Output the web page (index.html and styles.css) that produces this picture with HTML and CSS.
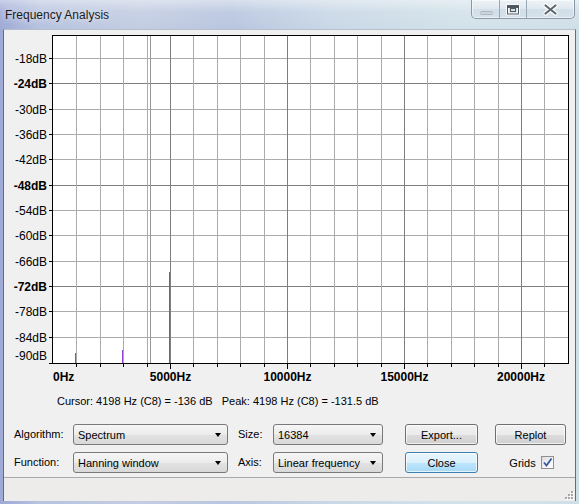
FILE: index.html
```html
<!DOCTYPE html>
<html>
<head>
<meta charset="utf-8">
<link rel="stylesheet" href="styles.css">
</head>
<body>
<div class="window">
  <div class="titlebar">
    <div class="title">Frequency Analysis</div>
    <div class="captions">
      <div class="cap cap-min"><svg width="27" height="18" viewBox="0 0 27 18"><rect x="8.5" y="11.5" width="12" height="3" rx="1" fill="#ccd3da" stroke="#afb8c2"/></svg></div>
      <div class="cap cap-max"><svg width="26" height="18" viewBox="0 0 26 18"><rect x="7.5" y="5.5" width="11" height="8.5" fill="none" stroke="#ffffff" stroke-width="2.6"/><rect x="7.5" y="5.5" width="11" height="8.5" fill="none" stroke="#505860" stroke-width="1"/><rect x="8" y="6" width="10" height="2" fill="#505860"/><rect x="10.5" y="8.5" width="5" height="3" fill="none" stroke="#505860" stroke-width="1"/></svg></div>
      <div class="cap cap-close"><svg width="47" height="18" viewBox="0 0 47 18"><path d="M18.5 5.5 L28.5 13.5 M28.5 5.5 L18.5 13.5" stroke="#ffffff" stroke-width="4.2" stroke-linecap="round"/><path d="M18.5 5.5 L28.5 13.5 M28.5 5.5 L18.5 13.5" stroke="#5f6770" stroke-width="2.2" stroke-linecap="round"/></svg></div>
    </div>
  </div>
  <div class="client">
    <svg class="chart" width="571" height="360" viewBox="4 30 571 360" shape-rendering="crispEdges">
      <rect x="52.5" y="35.5" width="516" height="328" fill="#ffffff" stroke="none"/>
      <g class="hgrid" stroke="#ababab" stroke-width="1">
        <line x1="53" y1="58.5" x2="568" y2="58.5"/>
        <line x1="53" y1="83.5" x2="568" y2="83.5" stroke="#7f7f7f"/>
        <line x1="53" y1="109.5" x2="568" y2="109.5"/>
        <line x1="53" y1="134.5" x2="568" y2="134.5"/>
        <line x1="53" y1="159.5" x2="568" y2="159.5"/>
        <line x1="53" y1="185.5" x2="568" y2="185.5" stroke="#7f7f7f"/>
        <line x1="53" y1="210.5" x2="568" y2="210.5"/>
        <line x1="53" y1="235.5" x2="568" y2="235.5"/>
        <line x1="53" y1="261.5" x2="568" y2="261.5"/>
        <line x1="53" y1="286.5" x2="568" y2="286.5" stroke="#7f7f7f"/>
        <line x1="53" y1="311.5" x2="568" y2="311.5"/>
        <line x1="53" y1="337.5" x2="568" y2="337.5"/>
      </g>
      <g class="vgrid" stroke="#ababab" stroke-width="1">
        <line x1="76.5" y1="36" x2="76.5" y2="363"/>
        <line x1="100.5" y1="36" x2="100.5" y2="363"/>
        <line x1="123.5" y1="36" x2="123.5" y2="363"/>
        <line x1="147.5" y1="36" x2="147.5" y2="363"/>
        <line x1="170.5" y1="36" x2="170.5" y2="363" stroke="#7f7f7f"/>
        <line x1="193.5" y1="36" x2="193.5" y2="363"/>
        <line x1="217.5" y1="36" x2="217.5" y2="363"/>
        <line x1="240.5" y1="36" x2="240.5" y2="363"/>
        <line x1="264.5" y1="36" x2="264.5" y2="363"/>
        <line x1="287.5" y1="36" x2="287.5" y2="363" stroke="#7f7f7f"/>
        <line x1="310.5" y1="36" x2="310.5" y2="363"/>
        <line x1="334.5" y1="36" x2="334.5" y2="363"/>
        <line x1="357.5" y1="36" x2="357.5" y2="363"/>
        <line x1="381.5" y1="36" x2="381.5" y2="363"/>
        <line x1="404.5" y1="36" x2="404.5" y2="363" stroke="#7f7f7f"/>
        <line x1="427.5" y1="36" x2="427.5" y2="363"/>
        <line x1="451.5" y1="36" x2="451.5" y2="363"/>
        <line x1="474.5" y1="36" x2="474.5" y2="363"/>
        <line x1="498.5" y1="36" x2="498.5" y2="363"/>
        <line x1="521.5" y1="36" x2="521.5" y2="363" stroke="#7f7f7f"/>
        <line x1="544.5" y1="36" x2="544.5" y2="363"/>
      </g>
      <line x1="150.5" y1="36" x2="150.5" y2="363" stroke="#969696"/>
      <g fill="#9440d2">
        <rect x="75" y="353" width="1" height="10"/>
        <rect x="122" y="350" width="1" height="13"/>
        <rect x="169" y="272" width="1" height="91"/>
      </g>
      <rect x="52.5" y="35.5" width="516" height="328" fill="none" stroke="#000000"/>
      <g class="yticks" stroke="#000000">
        <line x1="49" y1="58.5" x2="52" y2="58.5"/>
        <line x1="49" y1="83.5" x2="52" y2="83.5"/>
        <line x1="49" y1="109.5" x2="52" y2="109.5"/>
        <line x1="49" y1="134.5" x2="52" y2="134.5"/>
        <line x1="49" y1="159.5" x2="52" y2="159.5"/>
        <line x1="49" y1="185.5" x2="52" y2="185.5"/>
        <line x1="49" y1="210.5" x2="52" y2="210.5"/>
        <line x1="49" y1="235.5" x2="52" y2="235.5"/>
        <line x1="49" y1="261.5" x2="52" y2="261.5"/>
        <line x1="49" y1="286.5" x2="52" y2="286.5"/>
        <line x1="49" y1="311.5" x2="52" y2="311.5"/>
        <line x1="49" y1="337.5" x2="52" y2="337.5"/>
        <line x1="49" y1="363.5" x2="52" y2="363.5"/>
      </g>
      <g class="xticks" stroke="#000000">
        <line x1="76.5" y1="364" x2="76.5" y2="367"/>
        <line x1="100.5" y1="364" x2="100.5" y2="367"/>
        <line x1="123.5" y1="364" x2="123.5" y2="367"/>
        <line x1="147.5" y1="364" x2="147.5" y2="367"/>
        <line x1="170.5" y1="364" x2="170.5" y2="369"/>
        <line x1="193.5" y1="364" x2="193.5" y2="367"/>
        <line x1="217.5" y1="364" x2="217.5" y2="367"/>
        <line x1="240.5" y1="364" x2="240.5" y2="367"/>
        <line x1="264.5" y1="364" x2="264.5" y2="367"/>
        <line x1="287.5" y1="364" x2="287.5" y2="369"/>
        <line x1="310.5" y1="364" x2="310.5" y2="367"/>
        <line x1="334.5" y1="364" x2="334.5" y2="367"/>
        <line x1="357.5" y1="364" x2="357.5" y2="367"/>
        <line x1="381.5" y1="364" x2="381.5" y2="367"/>
        <line x1="404.5" y1="364" x2="404.5" y2="369"/>
        <line x1="427.5" y1="364" x2="427.5" y2="367"/>
        <line x1="451.5" y1="364" x2="451.5" y2="367"/>
        <line x1="474.5" y1="364" x2="474.5" y2="367"/>
        <line x1="498.5" y1="364" x2="498.5" y2="367"/>
        <line x1="521.5" y1="364" x2="521.5" y2="369"/>
        <line x1="544.5" y1="364" x2="544.5" y2="367"/>
      </g>
      <g class="ylabels" text-anchor="end">
        <text x="47" y="63">-18dB</text>
        <text x="47" y="88" class="b">-24dB</text>
        <text x="47" y="114">-30dB</text>
        <text x="47" y="139">-36dB</text>
        <text x="47" y="164">-42dB</text>
        <text x="47" y="190" class="b">-48dB</text>
        <text x="47" y="215">-54dB</text>
        <text x="47" y="240">-60dB</text>
        <text x="47" y="266">-66dB</text>
        <text x="47" y="291" class="b">-72dB</text>
        <text x="47" y="316">-78dB</text>
        <text x="47" y="342">-84dB</text>
        <text x="47" y="360">-90dB</text>
      </g>
      <g class="xlabels" text-anchor="middle">
        <text x="53" y="381" text-anchor="start">0Hz</text>
        <text x="170.5" y="381">5000Hz</text>
        <text x="287.5" y="381">10000Hz</text>
        <text x="404.5" y="381">15000Hz</text>
        <text x="521" y="381">20000Hz</text>
      </g>
    </svg>
    <div class="cursor">Cursor: 4198 Hz (C8) = -136 dB&nbsp;&nbsp;&nbsp;Peak: 4198 Hz (C8) = -131.5 dB</div>
    <div class="controls">
      <span class="lbl">Algorithm:</span>
      <div class="combo combo-wide"><span>Spectrum</span><i class="arrow"></i></div>
      <span class="lbl lbl-mid">Size:</span>
      <div class="combo"><span>16384</span><i class="arrow"></i></div>
      <div class="btn btn-export">Export...</div>
      <div class="btn btn-side">Replot</div>
      <span class="lbl">Function:</span>
      <div class="combo combo-wide"><span>Hanning window</span><i class="arrow"></i></div>
      <span class="lbl lbl-mid">Axis:</span>
      <div class="combo"><span>Linear frequency</span><i class="arrow"></i></div>
      <div class="btn btn-export btn-focus">Close</div>
      <div class="grids btn-side"><span>Grids</span><span class="check"><svg width="11" height="11" viewBox="0 0 11 11"><path d="M2 5.5 L4.5 8.5 L9.5 1.5" fill="none" stroke="#3a57a0" stroke-width="1.8"/></svg></span></div>
    </div>
    <div class="status">
      <svg class="grip" width="10" height="10" viewBox="0 0 10 10">
        <g fill="#ffffff"><rect x="8" y="8" width="2" height="2"/><rect x="5" y="8" width="2" height="2"/><rect x="2" y="8" width="2" height="2"/><rect x="8" y="5" width="2" height="2"/><rect x="5" y="5" width="2" height="2"/><rect x="8" y="2" width="2" height="2"/></g>
        <g fill="#a8a8a8"><rect x="7" y="7" width="2" height="2"/><rect x="4" y="7" width="2" height="2"/><rect x="1" y="7" width="2" height="2"/><rect x="7" y="4" width="2" height="2"/><rect x="4" y="4" width="2" height="2"/><rect x="7" y="1" width="2" height="2"/></g>
      </svg>
    </div>
  </div>
</div>
</body>
</html>
```

FILE: styles.css
```css
html, body {
  margin: 0;
  padding: 0;
}
body {
  width: 579px;
  height: 504px;
  overflow: hidden;
  font-family: "Liberation Sans", Arial, sans-serif;
  font-size: 11px;
  color: #000;
}
.window {
  width: 579px;
  height: 504px;
  box-sizing: border-box;
  padding: 0 3px 3px 3px;
  display: flex;
  flex-direction: column;
  background:
    linear-gradient(180deg, rgba(255,255,255,0.45) 0px, rgba(255,255,255,0.1) 12px, rgba(255,255,255,0) 29px),
    linear-gradient(90deg, #9ea9d6 0px, #b7c3df 40px, #c3cde2 140px, #b9c6e0 230px, #c9d8e6 330px, #d3e2ea 470px, #cfdfe8 579px);
}
.titlebar {
  height: 29px;
  display: flex;
  align-items: flex-start;
  flex-shrink: 0;
}
.title {
  padding: 8px 0 0 2px;
  font-size: 12px;
  line-height: 14px;
  color: #1a1a1a;
  text-shadow: 0 0 6px rgba(255,255,255,0.9);
}
.captions {
  margin-left: auto;
  margin-right: 1px;
  display: flex;
  height: 19px;
  border: 1px solid #8a98a8;
  border-top: none;
  border-radius: 0 0 5px 5px;
  overflow: hidden;
  box-sizing: border-box;
  background: linear-gradient(180deg, #eef3f7 0%, #dfe8ef 50%, #d2dee8 51%, #d6e2ea 100%);
  box-shadow: inset 0 0 0 1px rgba(255,255,255,0.5);
}
.cap {
  height: 18px;
  display: flex;
}
.cap svg { display: block; }
.cap-min, .cap-max {
  border-right: 1px solid #9aa7b4;
}
.cap-min { width: 27px; }
.cap-max { width: 26px; }
.cap-close { width: 47px; }

.client {
  flex: 1;
  display: flex;
  flex-direction: column;
  background: #f0f0f0;
  border-left: 1px solid #5f6d7c;
  border-right: 1px solid #5f6d7c;
  border-top: 1px solid #b4c0cc;
  min-height: 0;
}
.chart {
  display: block;
  flex-shrink: 0;
}
.chart text {
  font-family: "Liberation Sans", Arial, sans-serif;
  font-size: 12px;
  fill: #000;
}
.chart .b, .xlabels text {
  font-weight: bold;
}
.cursor {
  height: 22px;
  line-height: 22px;
  padding-left: 53px;
  flex-shrink: 0;
  white-space: pre;
}
.controls {
  margin-top: 12px;
  padding-left: 10px;
  display: grid;
  grid-template-columns: 59px 155px 45px 110px 95px 88px;
  grid-template-rows: 21px 21px;
  row-gap: 7px;
  align-items: center;
}
.lbl {
  line-height: 21px;
}
.lbl-mid { margin-left: 10px; }
.btn-export { margin-left: 22px; }
.btn-side { margin-left: 17px; }
.combo {
  height: 21px;
  box-sizing: border-box;
  border: 1px solid #7a7a7a;
  border-radius: 3px;
  background: linear-gradient(180deg, #f6f6f6 0%, #ececec 50%, #e2e2e2 51%, #d9d9d9 100%);
  display: flex;
  align-items: center;
  justify-content: space-between;
  padding: 0 6px 0 4px;
}
.arrow {
  width: 0;
  height: 0;
  border-left: 3.5px solid transparent;
  border-right: 3.5px solid transparent;
  border-top: 4px solid #000;
  margin-top: 1px;
}
.btn {
  height: 21px;
  box-sizing: border-box;
  border: 1px solid #707070;
  border-radius: 3px;
  background: linear-gradient(180deg, #f2f2f2 0%, #ebebeb 50%, #dddddd 51%, #cfcfcf 100%);
  box-shadow: inset 0 0 0 1px rgba(255,255,255,0.7);
  display: flex;
  align-items: center;
  justify-content: center;
}
.btn-focus {
  border-color: #3c7fb1;
  background: linear-gradient(180deg, #eaf6fd 0%, #d9f0fc 50%, #bee6fd 51%, #a7d9f5 100%);
}
.grids {
  display: flex;
  align-items: center;
  justify-content: center;
  gap: 5px;
  padding-left: 2px;
}
.check {
  width: 13px;
  height: 13px;
  box-sizing: border-box;
  border: 1px solid #8e8f8f;
  background: linear-gradient(135deg, #dcdcdc 0%, #f4f4f4 60%, #ffffff 100%);
  display: flex;
  align-items: center;
  justify-content: center;
}
.check svg { display: block; }
.status {
  margin-top: auto;
  height: 24px;
  box-sizing: border-box;
  border-top: 1px solid #a9a9a9;
  background: #eeecea;
  display: flex;
  justify-content: flex-end;
  align-items: flex-end;
  padding: 0 1px 1px 0;
}
.grip { display: block; }
```
